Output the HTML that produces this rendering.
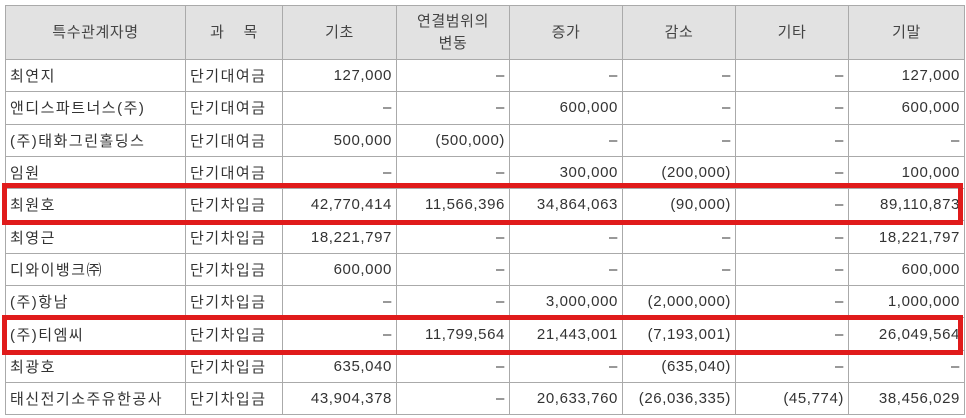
<!DOCTYPE html>
<html><head><meta charset="utf-8"><style>
body{margin:0;background:#fff;width:966px;height:418px;overflow:hidden;position:relative;font-family:"Liberation Sans","Noto Sans CJK KR",sans-serif;}
table{position:absolute;left:5px;top:5px;border-collapse:collapse;font-size:15px;color:#333;letter-spacing:0.6px;table-layout:fixed;width:959px}
td,th{border:1px solid #aaa;padding:0 4px;white-space:nowrap;overflow:hidden}
tr{height:32.3px}
tr.h{height:54px}
th{background:#e2e2e2;font-weight:normal;text-align:center;line-height:22px;color:#444}
td.k{letter-spacing:1.5px}
td.n{text-align:right}
.box{position:absolute;border:5px solid #e01b1b;left:2px;width:951px;}
</style></head><body>
<table>
<colgroup><col style="width:180px"><col style="width:97px"><col style="width:114px"><col style="width:113px"><col style="width:113px"><col style="width:113px"><col style="width:113px"><col style="width:116px"></colgroup>
<tr class="h"><th>특수관계자명</th><th>과&nbsp;&nbsp;&nbsp;&nbsp;목</th><th>기초</th><th>연결범위의<br>변동</th><th>증가</th><th>감소</th><th>기타</th><th>기말</th></tr>
<tr><td class="k">최연지</td><td class="k">단기대여금</td><td class="n">127,000</td><td class="n">–</td><td class="n">–</td><td class="n">–</td><td class="n">–</td><td class="n">127,000</td></tr>
<tr><td class="k">앤디스파트너스(주)</td><td class="k">단기대여금</td><td class="n">–</td><td class="n">–</td><td class="n">600,000</td><td class="n">–</td><td class="n">–</td><td class="n">600,000</td></tr>
<tr><td class="k">(주)태화그린홀딩스</td><td class="k">단기대여금</td><td class="n">500,000</td><td class="n">(500,000)</td><td class="n">–</td><td class="n">–</td><td class="n">–</td><td class="n">–</td></tr>
<tr><td class="k">임원</td><td class="k">단기대여금</td><td class="n">–</td><td class="n">–</td><td class="n">300,000</td><td class="n">(200,000)</td><td class="n">–</td><td class="n">100,000</td></tr>
<tr><td class="k">최원호</td><td class="k">단기차입금</td><td class="n">42,770,414</td><td class="n">11,566,396</td><td class="n">34,864,063</td><td class="n">(90,000)</td><td class="n">–</td><td class="n">89,110,873</td></tr>
<tr><td class="k">최영근</td><td class="k">단기차입금</td><td class="n">18,221,797</td><td class="n">–</td><td class="n">–</td><td class="n">–</td><td class="n">–</td><td class="n">18,221,797</td></tr>
<tr><td class="k">디와이뱅크㈜</td><td class="k">단기차입금</td><td class="n">600,000</td><td class="n">–</td><td class="n">–</td><td class="n">–</td><td class="n">–</td><td class="n">600,000</td></tr>
<tr><td class="k">(주)항남</td><td class="k">단기차입금</td><td class="n">–</td><td class="n">–</td><td class="n">3,000,000</td><td class="n">(2,000,000)</td><td class="n">–</td><td class="n">1,000,000</td></tr>
<tr><td class="k">(주)티엠씨</td><td class="k">단기차입금</td><td class="n">–</td><td class="n">11,799,564</td><td class="n">21,443,001</td><td class="n">(7,193,001)</td><td class="n">–</td><td class="n">26,049,564</td></tr>
<tr><td class="k">최광호</td><td class="k">단기차입금</td><td class="n">635,040</td><td class="n">–</td><td class="n">–</td><td class="n">(635,040)</td><td class="n">–</td><td class="n">–</td></tr>
<tr><td class="k">태신전기소주유한공사</td><td class="k">단기차입금</td><td class="n">43,904,378</td><td class="n">–</td><td class="n">20,633,760</td><td class="n">(26,036,335)</td><td class="n">(45,774)</td><td class="n">38,456,029</td></tr>
</table>
<div class="box" style="top:183px;height:32px"></div>
<div class="box" style="top:315px;height:30px"></div>
</body></html>
